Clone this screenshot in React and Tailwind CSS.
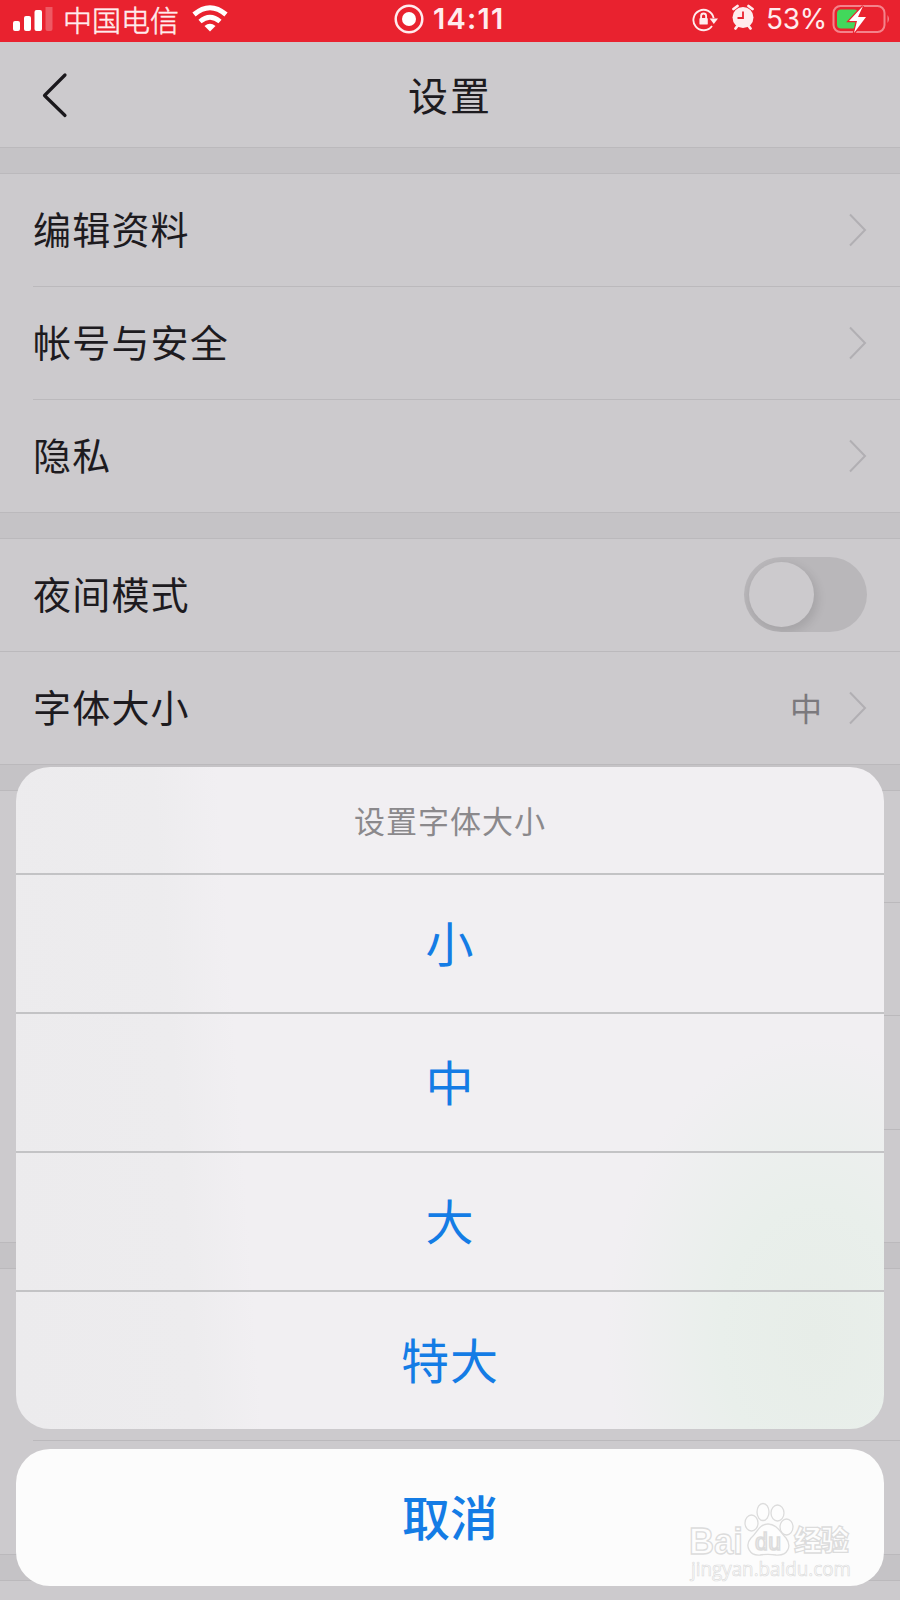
const groups = [
  {
    id: 'account',
    rows: [
      { label: '编辑资料', height: 'h-[113px]' },
      { label: '帐号与安全', height: 'h-[113px]' },
      { label: '隐私', height: 'h-[112px]' },
    ],
  },
  {
    id: 'display',
    rows: [
      { label: '夜间模式', height: 'h-[113px]', toggle: true, fullLine: true },
      { label: '字体大小', height: 'h-[112px]', value: '中' },
    ],
  },
  {
    id: 'general',
    rows: [
      { height: 'h-[112px]' },
      { height: 'h-[113px]' },
      { height: 'h-[114px]' },
      { height: 'h-[112px]' },
    ],
  },
  {
    id: 'more',
    rows: [{ height: 'h-[172px]' }, { height: 'h-[113px]' }],
  },
];

const sizes = ['小', '中', '大', '特大'];

const StatusBar = () => (
  <div className="relative flex h-[42px] items-center justify-between bg-[#e9222f] pl-3 pr-[10px] text-[#ffecee]">
    <div className="flex items-center">
      <svg className="h-[28px] w-[42px]" viewBox="0 0 42 28" fill="#fff">
        <rect x="1" y="14" width="7" height="10" rx="2" />
        <rect x="12" y="9" width="7" height="15" rx="2" />
        <rect x="22.500" y="3" width="7.500" height="21" rx="2" />
        <rect x="33.500" y="-2" width="7" height="26" rx="2" opacity=".25" />
      </svg>
      <span className="ml-[9px] pb-[5px] text-[29px] leading-[36px] font-light [-webkit-text-stroke:0.5px_#ffecee]">中国电信</span>
      <svg className="mb-[4px] ml-[13px] h-[28px] w-[36px]" viewBox="0 0 36 28" fill="none" stroke="#fff">
        <path d="M2 9.500Q18-4 34 9.500" strokeWidth="5" />
        <path d="M8 16.500Q18 8 28 16.500" strokeWidth="4.800" />
        <path d="M18 26.500L12.500 21Q18 16.500 23.500 21Z" fill="#fff" stroke="none" />
      </svg>
    </div>

    <div className="absolute left-[394px] top-0 flex h-[37px] items-center">
      <svg className="h-[30px] w-[30px]" viewBox="0 0 30 30">
        <circle cx="15" cy="15" r="13.300" fill="none" stroke="#ffecee" strokeWidth="2.500" />
        <circle cx="15" cy="15" r="7" fill="#fff" />
      </svg>
      <span className="ml-[9px] font-[Inter] text-[29px] font-semibold tracking-[1.2px]">14:11</span>
    </div>

    <div className="flex items-center pb-[5px]">
      <svg className="h-[26px] w-[26px]" viewBox="0 0 28 26" fill="none" stroke="#ffecee" strokeWidth="2">
        <path d="M21.500 20.500A11 11 0 1 1 23.300 12" />
        <path d="M19 12.500h9l-4.500 6z" fill="#ffecee" stroke="none" />
        <rect x="8" y="12" width="9" height="7" rx="1" fill="#ffecee" stroke="none" />
        <path d="M9.800 12V9.800a2.700 2.700 0 0 1 5.400 0V12" />
      </svg>
      <svg className="mb-[3px] ml-[13px] h-[26px] w-[24px]" viewBox="0 0 24 26">
        <circle cx="12" cy="13.500" r="10.500" fill="#ffecee" />
        <path d="M2.500 5L6.500 2M21.500 5L17.500 2M4.500 24.500l3-4M19.500 24.500l-3-4" stroke="#ffecee" strokeWidth="2.800" strokeLinecap="round" />
        <path d="M12 7.500V14H6.500" fill="none" stroke="#e9222f" strokeWidth="1.800" />
      </svg>
      <span className="ml-[11px] w-[61px] whitespace-nowrap font-[Inter] text-[28px] leading-[30px] tracking-[-0.3px]">53%</span>
      <svg className="ml-[5px] h-[32px] w-[58px]" viewBox="0 0 58 32">
        <rect x="1.500" y="3" width="51" height="26" rx="7" fill="none" stroke="#f4838b" strokeWidth="2" />
        <path d="M55.500 12q3 4 0 8z" fill="#f4838b" />
        <rect x="5" y="6.500" width="21" height="19" rx="4" fill="#42d85b" />
        <path d="M31 3L17 18h8l-3 12L34 14h-8z" fill="#fff" stroke="#e9222f" strokeWidth="2.500" paintOrder="stroke" />
      </svg>
    </div>
  </div>
);

const Chevron = () => (
  <svg className="h-[34px] w-[18px]" viewBox="0 0 18 34" fill="none" stroke="#b1afb3" strokeWidth="2">
    <path d="M1 1.500L16 17L1 32.500" />
  </svg>
);

const Toggle = () => (
  <div className="mb-[2px] h-[75px] w-[123px] overflow-hidden rounded-full bg-[#b9b7ba] p-[5px]">
    <div className="size-[65px] rounded-full bg-[#cccacd] shadow-[2px_4px_10px_2px_rgba(0,0,0,0.1)]" />
  </div>
);

const Row = ({ row, last }) => (
  <div className={`flex ${row.height} ${row.fullLine ? '' : 'pl-[33px]'}`}>
    <div
      className={`flex flex-1 items-center justify-between pr-[33px] ${row.fullLine ? 'pl-[33px]' : ''} ${last ? '' : 'border-b border-[#bbb9bc]'}`}
    >
      {row.label && (
        <>
          <span className="pb-[4px] text-[38px] leading-none tracking-[1.2px] text-[#1d1b1f]">{row.label}</span>
          <div className="flex items-center">
            {row.value && <span className="mr-[27px] pb-[3px] text-[32px] leading-none text-[#7b797d]">{row.value}</span>}
            {row.toggle ? <Toggle /> : <Chevron />}
          </div>
        </>
      )}
    </div>
  </div>
);

const ActionSheet = () => (
  <div className="absolute inset-x-4 top-[767px]">
    <div className="h-[662px] overflow-hidden rounded-[34px] bg-[radial-gradient(ellipse_210px_300px_at_800px_570px,#e7ede8_0%,#e9efeb_45%,transparent_100%),linear-gradient(86deg,#ecebed_0%,#edecee_20%,#f1eff2_27%,#f1eff2_100%)]">
      <div className="flex h-[106px] items-center justify-center text-[31px] tracking-[1px] text-[#8b898c]">设置字体大小</div>
      {sizes.map((size) => (
        <button
          key={size}
          className="flex h-[139px] w-full items-center justify-center border-t-2 border-[#c3c3c5] pb-[5px] text-[48px] leading-none tracking-[1px] text-[#147ce5]"
        >
          {size}
        </button>
      ))}
    </div>
    <button className="mt-[20px] flex h-[137px] w-full items-center justify-center rounded-[34px] bg-[#fcfcfc] pb-[5px] text-[48px] leading-none font-medium text-[#147ce5]">
      取消
    </button>
  </div>
);

const Watermark = () => (
  <svg
    className="absolute left-[688px] top-[1500px] h-[90px] w-[172px]"
    viewBox="0 0 172 90"
    fill="#fdfdfd"
    stroke="#dcdcdc"
    strokeWidth="1.300"
  >
    <text x="1" y="53.500" fontFamily="Liberation Sans" fontWeight="700" fontSize="36" textLength="54" lengthAdjust="spacingAndGlyphs">Bai</text>
    <ellipse cx="63.500" cy="23" rx="6.500" ry="8" />
    <ellipse cx="75" cy="12" rx="6" ry="8.500" />
    <ellipse cx="89.500" cy="13" rx="6.500" ry="8" />
    <ellipse cx="98.500" cy="27" rx="6.500" ry="8" />
    <path d="M80 24c-9 0-11 9-17 14c-7 8-1 18 9 17c6-1 10-1 16 0c12 1 16-9 10-17c-6-6-9-14-18-14z" />
    <text x="67" y="50" fontFamily="Liberation Sans" fontWeight="400" fontSize="23" strokeWidth="1.600" textLength="26">du</text>
    <text x="106" y="51" fontFamily="Noto Sans CJK SC" fontWeight="900" fontSize="28" textLength="55">经验</text>
    <text x="3" y="76" fontFamily="Open Sans" fontSize="20" strokeWidth=".7" textLength="160" lengthAdjust="spacingAndGlyphs">jingyan.baidu.com</text>
  </svg>
);

export default function App() {
  return (
    <div
      lang="zh-CN"
      className="relative h-[1600px] w-[900px] overflow-hidden bg-[#c5c3c6] font-['Noto_Sans_CJK_SC',sans-serif]"
    >
      <StatusBar />
      <header className="flex h-[105px] items-center bg-[#cccacd] pl-[41px] pr-[42px]">
        <svg className="h-[46px] w-[27px]" viewBox="0 0 27 46" fill="none" stroke="#1a181c" strokeWidth="3.200" strokeLinecap="round" strokeLinejoin="round">
          <path d="M24 3L3.500 23.500L24 43.500" />
        </svg>
        <h1 className="flex-1 pb-px pr-[26px] text-center text-[40px] leading-none tracking-[2px] text-[#1d1b1f]">设置</h1>
      </header>
      <main className="flex flex-col">
        {groups.map((group) => (
          <section key={group.id} className="border-t border-[#bbb9bc] pt-[25px]">
            <div className="border-t border-[#bbb9bc] bg-[#cccacd]">
              {group.rows.map((row, i) => (
                <Row key={i} row={row} last={i === group.rows.length - 1} />
              ))}
            </div>
          </section>
        ))}
        <div className="h-[27px] border-y border-[#bbb9bc]" />
        <div className="h-[40px] bg-[#cccacd]" />
      </main>
      <ActionSheet />
      <Watermark />
    </div>
  );
}
